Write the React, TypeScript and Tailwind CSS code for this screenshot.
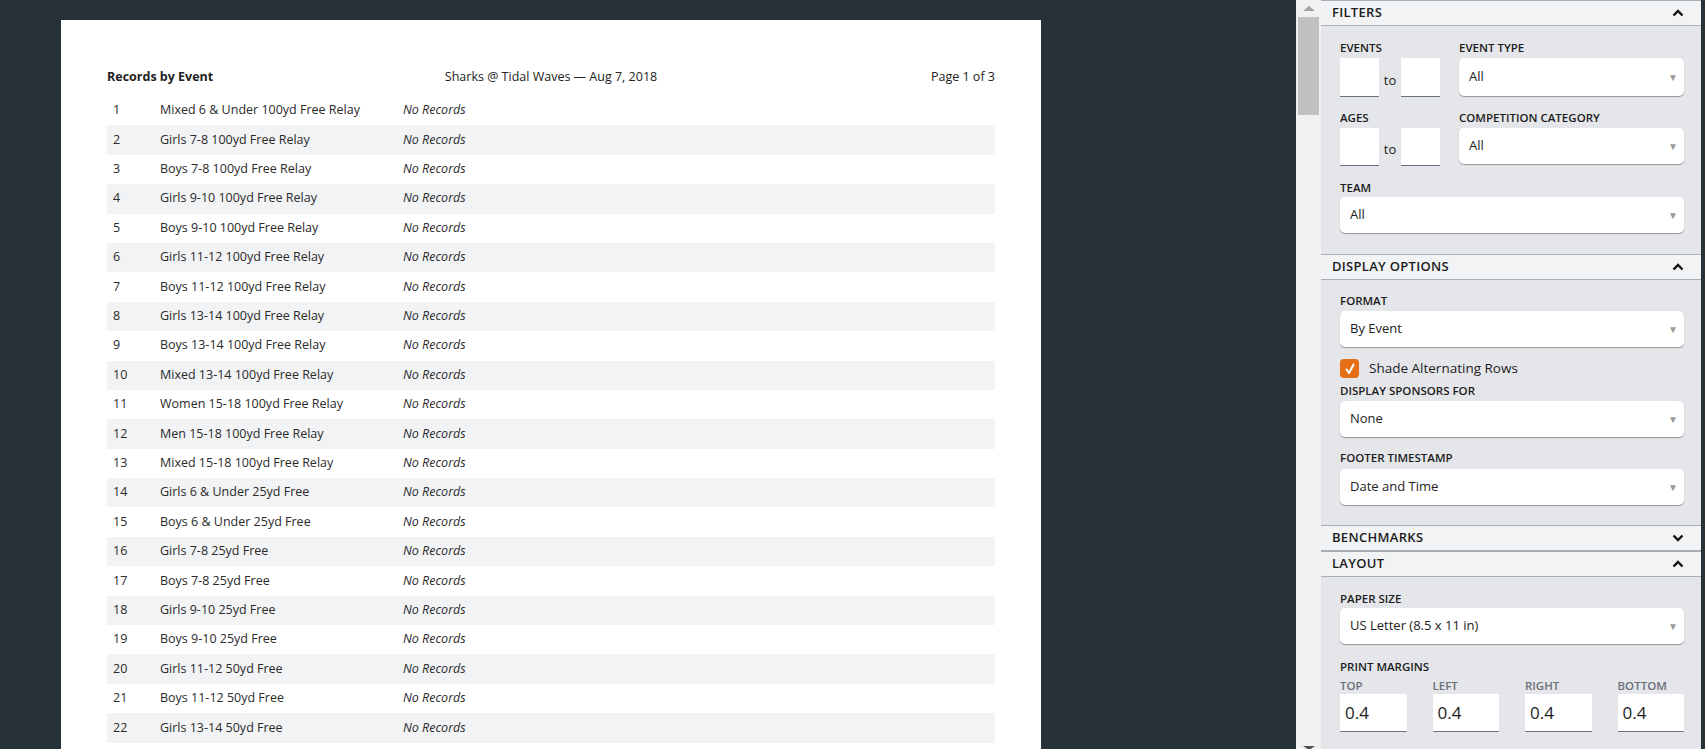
import React from "react";

const rows: string[] = [
  "Mixed 6 & Under 100yd Free Relay",
  "Girls 7-8 100yd Free Relay",
  "Boys 7-8 100yd Free Relay",
  "Girls 9-10 100yd Free Relay",
  "Boys 9-10 100yd Free Relay",
  "Girls 11-12 100yd Free Relay",
  "Boys 11-12 100yd Free Relay",
  "Girls 13-14 100yd Free Relay",
  "Boys 13-14 100yd Free Relay",
  "Mixed 13-14 100yd Free Relay",
  "Women 15-18 100yd Free Relay",
  "Men 15-18 100yd Free Relay",
  "Mixed 15-18 100yd Free Relay",
  "Girls 6 & Under 25yd Free",
  "Boys 6 & Under 25yd Free",
  "Girls 7-8 25yd Free",
  "Boys 7-8 25yd Free",
  "Girls 9-10 25yd Free",
  "Boys 9-10 25yd Free",
  "Girls 11-12 50yd Free",
  "Boys 11-12 50yd Free",
  "Girls 13-14 50yd Free",
];

function Chevron({ up }: { up: boolean }) {
  return (
    <svg width="12" height="8" viewBox="0 0 12 8" className="text-[#111]">
      {up ? (
        <polyline points="1.5,6.5 6,2 10.5,6.5" fill="none" stroke="currentColor" strokeWidth="2.4" />
      ) : (
        <polyline points="1.5,1.5 6,6 10.5,1.5" fill="none" stroke="currentColor" strokeWidth="2.4" />
      )}
    </svg>
  );
}

function Header({ title, up }: { title: string; up: boolean }) {
  return (
    <div className="h-[26px] shrink-0 flex items-center justify-between pl-[11px] pr-[17px] bg-[#f2f3f5] border-y border-[#a8afb7] text-[13px] font-semibold text-[#1c1c1c] tracking-[0.3px]">
      <span>{title}</span>
      <Chevron up={up} />
    </div>
  );
}

function Label({ children, className = "" }: { children: React.ReactNode; className?: string }) {
  return <div className={"h-[16px] leading-[16px] text-[11.5px] font-semibold text-[#1c1c1c] " + className}>{children}</div>;
}

function Select({ value, className = "" }: { value: string; className?: string }) {
  return (
    <div
      className={
        "flex items-center justify-between bg-white rounded-[5px] pl-[10px] pr-[6px] text-[13px] text-[#1c1c1c] shadow-[0_1px_1px_rgba(0,0,0,0.35)] " +
        className
      }
    >
      <span>{value}</span>
      <span className="text-[10px] text-[#9a9a9a]">▼</span>
    </div>
  );
}

function SmallInput({ className = "" }: { className?: string }) {
  return <div className={"bg-white border-b-[1.5px] border-[#6b7280] " + className} />;
}

export default function App() {
  return (
    <div className="w-[1705px] h-[749px] flex overflow-hidden bg-[#263238] font-['Open_Sans',sans-serif]">
      {/* Main preview area */}
      <div className="w-[1296px] h-full shrink-0 overflow-hidden">
        <div className="ml-[61px] mt-[20px] w-[980px] h-[760px] bg-white px-[46px] pt-[48px]">
          <div className="h-[18px] flex items-center justify-between text-[12.5px] text-[#222]">
            <span className="font-bold w-[200px]">Records by Event</span>
            <span>Sharks @ Tidal Waves — Aug 7, 2018</span>
            <span className="w-[200px] text-right">Page 1 of 3</span>
          </div>
          <div className="mt-[10px]">
            {rows.map((r, i) => (
              <div
                key={i}
                className={
                  "h-[29.4px] flex items-center text-[12.5px] text-[#2a2a2a] " + (i % 2 === 1 ? "bg-[#f2f3f5]" : "bg-white")
                }
              >
                <span className="w-[53px] pl-[6px]">{i + 1}</span>
                <span className="w-[243px]">{r}</span>
                <span className="italic">No Records</span>
              </div>
            ))}
          </div>
        </div>
      </div>

      {/* Sidebar */}
      <div className="w-[407px] h-full shrink-0 flex">
        {/* scrollbar */}
        <div className="w-[25px] h-full bg-[#f1f1f1] flex flex-col items-center relative">
          <div className="mt-[6px] w-0 h-0 border-x-[6px] border-x-transparent border-b-[5px] border-b-[#a3a3a3]" />
          <div className="mt-[6px] w-[21px] h-[98px] bg-[#c1c1c1]" />
          <div className="absolute bottom-[-1px] w-0 h-0 border-x-[6px] border-x-transparent border-t-[4px] border-t-[#505050]" />
        </div>

        {/* panel */}
        <div className="flex-1 h-full bg-[#e4e6e9] flex flex-col overflow-hidden shadow-[inset_0_3px_3px_-2px_rgba(0,0,0,0.35)]">
          <Header title="FILTERS" up />
          <div className="pl-[19px] pr-[17px] pt-[14px] pb-[21px]">
            <div className="flex gap-[19px]">
              <div className="w-[100px]">
                <Label>EVENTS</Label>
                <div className="mt-[2px] flex items-center">
                  <SmallInput className="w-[39px] h-[39px]" />
                  <span className="w-[22px] text-center text-[13px] text-[#1c1c1c] pt-[6px]">to</span>
                  <SmallInput className="w-[39px] h-[39px]" />
                </div>
              </div>
              <div className="flex-1">
                <Label>EVENT TYPE</Label>
                <Select value="All" className="mt-[2px] h-[38px]" />
              </div>
            </div>
            <div className="flex gap-[19px] mt-[13px]">
              <div className="w-[100px]">
                <Label>AGES</Label>
                <div className="mt-[2px] flex items-center">
                  <SmallInput className="w-[39px] h-[38px]" />
                  <span className="w-[22px] text-center text-[13px] text-[#1c1c1c] pt-[6px]">to</span>
                  <SmallInput className="w-[39px] h-[38px]" />
                </div>
              </div>
              <div className="flex-1">
                <Label>COMPETITION CATEGORY</Label>
                <Select value="All" className="mt-[2px] h-[36px]" />
              </div>
            </div>
            <Label className="mt-[14px]">TEAM</Label>
            <Select value="All" className="mt-[1px] h-[36px]" />
          </div>

          <Header title="DISPLAY OPTIONS" up />
          <div className="pl-[19px] pr-[17px] pt-[13px] pb-[20px]">
            <Label>FORMAT</Label>
            <Select value="By Event" className="mt-[2px] h-[36px]" />
            <div className="mt-[12px] h-[19px] flex items-center">
              <div className="w-[19px] h-[19px] rounded-[4px] bg-[#e46f14] flex items-center justify-center">
                <svg width="12" height="12" viewBox="0 0 12 12">
                  <polyline points="2.5,6.5 5,10 9.5,1.5" fill="none" stroke="white" strokeWidth="2" strokeLinecap="round" strokeLinejoin="round" />
                </svg>
              </div>
              <span className="ml-[10px] text-[13.5px] text-[#1c1c1c]">Shade Alternating Rows</span>
            </div>
            <Label className="mt-[5px]">DISPLAY SPONSORS FOR</Label>
            <Select value="None" className="mt-[2px] h-[36px]" />
            <Label className="mt-[13px]">FOOTER TIMESTAMP</Label>
            <Select value="Date and Time" className="mt-[3px] h-[36px]" />
          </div>

          <Header title="BENCHMARKS" up={false} />
          <Header title="LAYOUT" up />
          <div className="pl-[19px] pr-[17px] pt-[14px]">
            <Label>PAPER SIZE</Label>
            <Select value="US Letter (8.5 x 11 in)" className="mt-[1px] h-[36px]" />
            <Label className="mt-[15px]">PRINT MARGINS</Label>
            <div className="mt-[3px] grid grid-cols-4 gap-[26px]">
              {["TOP", "LEFT", "RIGHT", "BOTTOM"].map((l) => (
                <div key={l}>
                  <div className="h-[16px] leading-[16px] text-[11.5px] font-semibold text-[#6b7079]">{l}</div>
                  <div className="h-[38px] bg-white border-b-[1.5px] border-[#6b7280] flex items-center pl-[5px] text-[17px] text-[#1c1c1c]">
                    0.4
                  </div>
                </div>
              ))}
            </div>
          </div>
        </div>
        <div className="w-[2px]" />
      </div>
    </div>
  );
}
